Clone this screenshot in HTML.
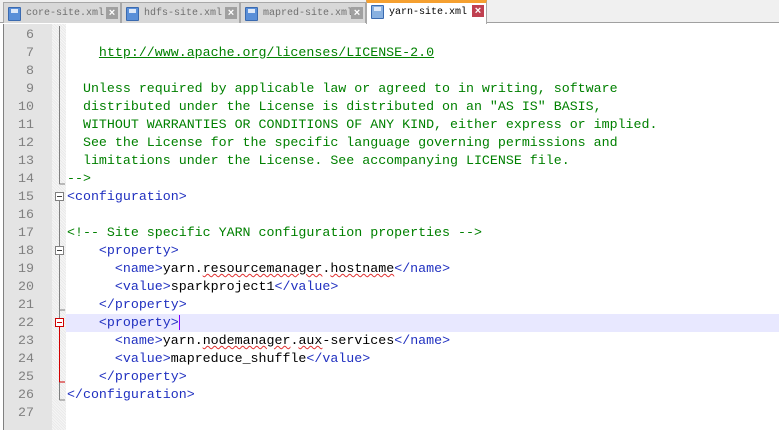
<!DOCTYPE html>
<html><head><meta charset="utf-8"><style>
*{margin:0;padding:0;box-sizing:border-box}
body{width:779px;height:430px;overflow:hidden;background:#fff;font-family:"Liberation Mono",monospace;position:relative}
#bar{position:absolute;left:0;top:0;width:779px;height:23px;background:#f0f0f0;border-bottom:1px solid #a0a0a0}
.tab{position:absolute;top:2px;height:21px;background:#d8d8d8;border:1px solid #a8a8a8;border-bottom:none;font-size:10px;color:#707070;line-height:21px;padding-left:22px;white-space:nowrap;overflow:hidden}
.tab.act{top:0;height:24px;background:#fff;color:#000;border-top:3px solid #f5a030;line-height:20px}
.ic{position:absolute;left:4px;top:4px;width:13px;height:14px;background:#5a8fd8;border:1px solid #3a6ab0;border-radius:1px}
.act .ic{top:2px}
.ic:after{content:"";position:absolute;left:2px;top:1px;width:7px;height:4px;background:#dde8f8}
.act .ic{background:#88b0e0}
.x{position:absolute;right:2px;top:4px;width:12px;height:12px;background:#a0a0a0;color:#fff;font:bold 11px/12px "Liberation Sans",sans-serif;text-align:center}
.act .x{background:#c04050;top:2px}
#gut{position:absolute;left:3px;top:24px;width:49px;height:406px;background:#e4e4e4;border-left:1px solid #808080}
#fold{position:absolute;left:52px;top:24px;width:14px;height:406px;background:#f2f2f2;background-image:repeating-linear-gradient(45deg,#eaeaea 0 1px,#f6f6f6 1px 2px)}
.ln{position:absolute;left:4px;width:30px;text-align:right;font-size:13.3px;color:#808080;height:18px;line-height:18px}
.row{position:absolute;left:67px;font-size:13.3px;white-space:pre;height:18px;line-height:18px;color:#000}
.t{color:#2030c0}.c{color:#008000}.u{color:#008000;text-decoration:underline}
.sq{text-decoration:underline wavy #e03030;text-decoration-thickness:1px}
#hl{position:absolute;left:66px;top:314px;width:713px;height:18px;background:#e8e8ff}
</style></head><body>
<div id="bar">
<div class="tab" style="left:3px;width:118px"><span class="ic"></span>core-site.xml<span class="x">×</span></div>
<div class="tab" style="left:121px;width:119px"><span class="ic"></span>hdfs-site.xml<span class="x">×</span></div>
<div class="tab" style="left:240px;width:126px"><span class="ic"></span>mapred-site.xml<span class="x">×</span></div>
<div class="tab act" style="left:366px;width:121px"><span class="ic"></span>yarn-site.xml<span class="x">×</span></div>
</div>
<div id="gut"></div>
<div id="fold"></div>
<div id="hl"></div>
<svg style="position:absolute;left:52px;top:24px" width="15" height="406">
<line x1="7.5" y1="2" x2="7.5" y2="160" stroke="#808080"/>
<line x1="7.5" y1="160" x2="13" y2="160" stroke="#808080"/>
<line x1="7.5" y1="174" x2="7.5" y2="376" stroke="#808080"/>
<line x1="7.5" y1="376" x2="13" y2="376" stroke="#808080"/>
<rect x="3.5" y="168.5" width="8" height="8" fill="#fff" stroke="#808080"/><line x1="5" y1="172.5" x2="10" y2="172.5" stroke="#404040"/>
<rect x="3.5" y="222.5" width="8" height="8" fill="#fff" stroke="#808080"/><line x1="5" y1="226.5" x2="10" y2="226.5" stroke="#404040"/>
<line x1="7.5" y1="286" x2="13" y2="286" stroke="#808080"/>
<line x1="7.5" y1="299" x2="7.5" y2="358" stroke="#d00000"/>
<line x1="7.5" y1="358" x2="13" y2="358" stroke="#d00000"/>
<rect x="3.5" y="294.5" width="8" height="8" fill="#fff" stroke="#d00000"/><line x1="5" y1="298.5" x2="10" y2="298.5" stroke="#d00000"/>
</svg>
<div class="ln" style="top:26px">6</div><div class="ln" style="top:44px">7</div><div class="ln" style="top:62px">8</div><div class="ln" style="top:80px">9</div><div class="ln" style="top:98px">10</div><div class="ln" style="top:116px">11</div><div class="ln" style="top:134px">12</div><div class="ln" style="top:152px">13</div><div class="ln" style="top:170px">14</div><div class="ln" style="top:188px">15</div><div class="ln" style="top:206px">16</div><div class="ln" style="top:224px">17</div><div class="ln" style="top:242px">18</div><div class="ln" style="top:260px">19</div><div class="ln" style="top:278px">20</div><div class="ln" style="top:296px">21</div><div class="ln" style="top:314px">22</div><div class="ln" style="top:332px">23</div><div class="ln" style="top:350px">24</div><div class="ln" style="top:368px">25</div><div class="ln" style="top:386px">26</div><div class="ln" style="top:404px">27</div>
<div class="row" style="top:44px">    <span class="u">http://www.apache.org/licenses/LICENSE-2.0</span></div>
<div class="row c" style="top:80px">  Unless required by applicable law or agreed to in writing, software</div>
<div class="row c" style="top:98px">  distributed under the License is distributed on an "AS IS" BASIS,</div>
<div class="row c" style="top:116px">  WITHOUT WARRANTIES OR CONDITIONS OF ANY KIND, either express or implied.</div>
<div class="row c" style="top:134px">  See the License for the specific language governing permissions and</div>
<div class="row c" style="top:152px">  limitations under the License. See accompanying LICENSE file.</div>
<div class="row c" style="top:170px">--&gt;</div>
<div class="row t" style="top:188px">&lt;configuration&gt;</div>
<div class="row c" style="top:224px">&lt;!-- Site specific YARN configuration properties --&gt;</div>
<div class="row" style="top:242px">    <span class="t">&lt;property&gt;</span></div>
<div class="row" style="top:260px">      <span class="t">&lt;name&gt;</span>yarn.<span class="sq">resourcemanager</span>.<span class="sq">hostname</span><span class="t">&lt;/name&gt;</span></div>
<div class="row" style="top:278px">      <span class="t">&lt;value&gt;</span>sparkproject1<span class="t">&lt;/value&gt;</span></div>
<div class="row" style="top:296px">    <span class="t">&lt;/property&gt;</span></div>
<div class="row" style="top:314px">    <span class="t">&lt;property&gt;</span><span style="border-left:1px solid #8000ff"></span></div>
<div class="row" style="top:332px">      <span class="t">&lt;name&gt;</span>yarn.<span class="sq">nodemanager</span>.<span class="sq">aux</span>-services<span class="t">&lt;/name&gt;</span></div>
<div class="row" style="top:350px">      <span class="t">&lt;value&gt;</span>mapreduce_shuffle<span class="t">&lt;/value&gt;</span></div>
<div class="row" style="top:368px">    <span class="t">&lt;/property&gt;</span></div>
<div class="row t" style="top:386px">&lt;/configuration&gt;</div>
</body></html>
